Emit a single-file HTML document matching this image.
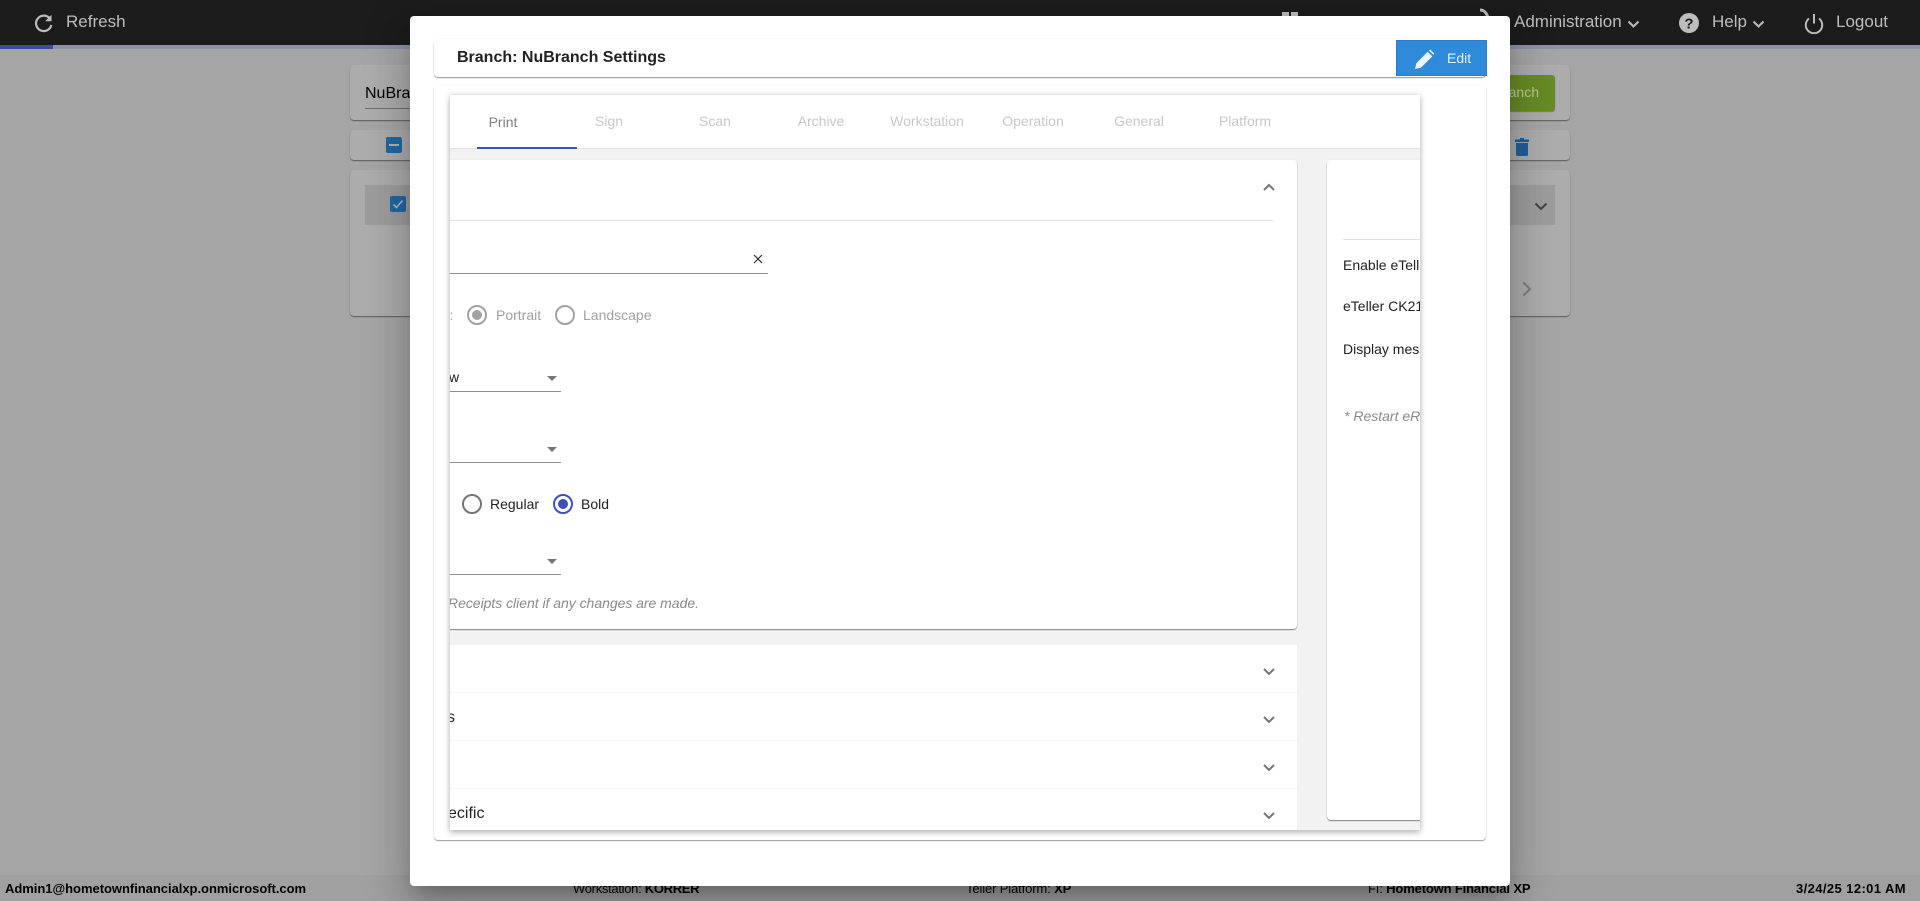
<!DOCTYPE html>
<html><head><meta charset="utf-8"><title>Branch Settings</title>
<style>
html,body{margin:0;padding:0;width:1920px;height:901px;overflow:hidden;background:#a5a5a5;font-family:"Liberation Sans",Arial,sans-serif}
*{box-sizing:border-box}
.a{position:absolute;white-space:nowrap}
.card{position:absolute;background:#acacac;border-radius:4px;box-shadow:0 1px 1px rgba(0,0,0,.45)}
.nav{color:#bdbdbd;font-size:17px;line-height:20px;top:12px}
.foot{font-size:13px;line-height:15px;top:881px;color:#000;font-weight:bold}
.foot span{font-weight:normal}
.t{font-size:14px;line-height:16px;color:#222}
.tab{position:absolute;width:106px;text-align:center;top:113px;font-size:14px;line-height:16px;color:#c8c8c8}
.ul{position:absolute;height:1px;background:#8f8f8f}
.arrow{position:absolute;width:0;height:0;border-left:5px solid transparent;border-right:5px solid transparent;border-top:5px solid #757575;left:547px}
.sep{position:absolute;left:450px;width:847px;height:1px;background:#f6f6f6}
</style></head><body>

<!-- background -->
<div class="a" style="left:0;top:875px;width:1920px;height:26px;background:#a0a0a0"></div>
<div class="card" style="left:350px;top:65px;width:1220px;height:55px"></div>
<div class="card" style="left:350px;top:130px;width:1220px;height:30px"></div>
<div class="card" style="left:350px;top:170px;width:1220px;height:146px"></div>
<div class="a" style="left:365px;top:185px;width:1190px;height:40px;background:#9d9d9d"></div>
<div class="a" style="left:365px;top:85px;font-size:16px;line-height:18px;color:#000">NuBranch</div>
<div class="a" style="left:365px;top:108px;width:300px;height:1px;background:#6f6f6f"></div>
<div class="a" style="left:386px;top:137px;width:16px;height:16px;background:#2068a6;border-radius:2px"></div>
<div class="a" style="left:389px;top:144px;width:10px;height:2px;background:#b5b5b5"></div>
<div class="a" style="left:390px;top:196px;width:16px;height:16px;background:#2068a6;border-radius:2px"></div>
<svg class="a" style="left:390px;top:196px" width="16" height="16"><path d="M3.5 8.5l3 3 6-7" fill="none" stroke="#b5b5b5" stroke-width="1.6"/></svg>
<div class="a" style="left:1400px;top:75px;width:155px;height:36px;background:#688c24;border-radius:3px;box-shadow:0 1px 1px rgba(0,0,0,.3)"></div>
<div class="a" style="left:1460px;top:84px;width:79px;text-align:right;font-size:14px;line-height:16px;color:#b9c9a0">Branch</div>
<svg class="a" style="left:1515px;top:138px" width="14" height="18"><path d="M5 0h4v1.5h5V4H0V1.5h5zM1 5h12v11.5a1.5 1.5 0 0 1-1.5 1.5h-9A1.5 1.5 0 0 1 1 16.500z" fill="#20609a"/></svg>
<svg class="a" style="left:1534px;top:202px" width="14" height="10"><path d="M1.500 1.500l5.500 5.500 5.500-5.500" fill="none" stroke="#444" stroke-width="2"/></svg>
<svg class="a" style="left:1522px;top:281px" width="10" height="16"><path d="M1.500 1.500l6.500 6.500-6.500 6.500" fill="none" stroke="#7c7c7c" stroke-width="2"/></svg>

<!-- footer text -->
<div class="a foot" style="left:5px;letter-spacing:-.03px">Admin1@hometownfinancialxp.onmicrosoft.com</div>
<div class="a foot" style="left:573px;letter-spacing:-.3px"><span>Workstation:</span> KORRER</div>
<div class="a foot" style="left:966px;letter-spacing:-.13px"><span>Teller Platform:</span> XP</div>
<div class="a foot" style="left:1368px;letter-spacing:-.15px"><span>FI:</span> Hometown Financial XP</div>
<div class="a foot" style="left:1796px;letter-spacing:.4px">3/24/25 12:01 AM</div>

<!-- top bar -->
<div class="a" style="left:0;top:0;width:1920px;height:45px;background:#1c1c1c"></div>
<div class="a" style="left:0;top:45px;width:1920px;height:4px;background:#8e91ab"></div>
<div class="a" style="left:0;top:45px;width:53px;height:4px;background:#3b4ba5"></div>
<svg class="a" style="left:34px;top:13px" width="20" height="20"><path d="M15.500 5.200A7.700 7.700 0 1 0 17.300 12" fill="none" stroke="#bdbdbd" stroke-width="2.200"/><path d="M17.500 1.800v6.400h-6.400z" fill="#bdbdbd"/></svg>
<div class="a nav" style="left:66px">Refresh</div>
<svg class="a" style="left:1280px;top:10px" width="20" height="8"><path d="M2 2h7v6H2zM11 2h7v6h-7z" fill="#bdbdbd"/></svg>
<svg class="a" style="left:1478px;top:8px" width="18" height="10"><path d="M2 2c4 0 7 3 8 8" fill="none" stroke="#bdbdbd" stroke-width="3"/></svg>
<div class="a nav" style="left:1514px">Administration</div>
<svg class="a" style="left:1627px;top:20px" width="13" height="10"><path d="M1.500 1.500l5 5 5-5" fill="none" stroke="#bdbdbd" stroke-width="2"/></svg>
<svg class="a" style="left:1679px;top:13px" width="20" height="20"><circle cx="10" cy="10" r="10" fill="#bdbdbd"/><text x="10" y="15.500" text-anchor="middle" font-family="Liberation Sans" font-weight="bold" font-size="15" fill="#1c1c1c">?</text></svg>
<div class="a nav" style="left:1712px">Help</div>
<svg class="a" style="left:1752px;top:20px" width="13" height="10"><path d="M1.500 1.500l5 5 5-5" fill="none" stroke="#bdbdbd" stroke-width="2"/></svg>
<svg class="a" style="left:1804px;top:12px" width="20" height="22"><path d="M5 6.500a8.200 8.200 0 1 0 10 0" fill="none" stroke="#bdbdbd" stroke-width="2"/><path d="M10 2v9.500" stroke="#bdbdbd" stroke-width="2"/></svg>
<div class="a nav" style="left:1836px">Logout</div>

<!-- modal -->
<div class="a" style="left:410px;top:16px;width:1100px;height:870px;background:#fff;border-radius:4px;box-shadow:0 11px 15px -7px rgba(0,0,0,.2),0 24px 38px 3px rgba(0,0,0,.14),0 9px 46px 8px rgba(0,0,0,.12)"></div>

<!-- header card -->
<div class="a" style="left:434px;top:39px;width:1052px;height:38px;background:#fff;border-radius:4px;box-shadow:0 1px 1px rgba(0,0,0,.42),0 0 2px rgba(0,0,0,.05)"></div>
<div class="a" style="left:457px;top:49px;font-size:16px;line-height:18px;font-weight:bold;color:#222">Branch: NuBranch Settings</div>
<div class="a" style="left:1396px;top:40px;width:91px;height:36px;background:#2f8ad9;border:1px solid #2a7cc4"></div>
<svg class="a" style="left:1414px;top:49px" width="21" height="21"><path d="M1 20l1.300-5.800L13.700 2.800l4.600 4.600L6.800 18.800z M15 1.500l1.200-1 4 4-1 1.200z" fill="#eef5fc"/></svg>
<div class="a" style="left:1447px;top:50px;font-size:14px;line-height:16px;color:#e6f1fb">Edit</div>

<!-- content card -->
<div class="a" style="left:434px;top:85px;width:1052px;height:755px;background:#fff;border-radius:4px;box-shadow:0 1px 1px rgba(0,0,0,.38),0 0 2px rgba(0,0,0,.06)"></div>

<!-- clipped panel -->
<div class="a" style="left:450px;top:95px;width:970px;height:735px;background:#f2f2f2;box-shadow:0 3px 6px rgba(0,0,0,.22),0 0 6px rgba(0,0,0,.14)"></div>
<div class="a" style="left:450px;top:95px;width:970px;height:735px;overflow:hidden">
<div style="position:absolute;left:-450px;top:-95px;width:1920px;height:901px">
  <div class="a" style="left:450px;top:95px;width:970px;height:54px;background:#fff;border-bottom:1px solid #e0e0e0"></div>
  <div class="a" style="left:477px;top:147px;width:100px;height:2px;background:#3f51b5"></div>
  <div class="tab" style="left:450px;top:114px;color:#808080">Print</div>
  <div class="tab" style="left:556px">Sign</div>
  <div class="tab" style="left:662px">Scan</div>
  <div class="tab" style="left:768px">Archive</div>
  <div class="tab" style="left:874px">Workstation</div>
  <div class="tab" style="left:980px">Operation</div>
  <div class="tab" style="left:1086px">General</div>
  <div class="tab" style="left:1192px">Platform</div>

  <!-- left main card -->
  <div class="a" style="left:430px;top:160px;width:867px;height:469px;background:#fff;border-radius:4px;box-shadow:0 1px 1px rgba(0,0,0,.45),0 0 3px rgba(0,0,0,.05)"></div>
  <div class="a" style="left:430px;top:220px;width:843px;height:1px;background:#e2e2e2"></div>
  <svg class="a" style="left:1263px;top:183px" width="12" height="8"><path d="M1 7l5-5 5 5" fill="none" stroke="#757575" stroke-width="2"/></svg>

  <div class="a" style="left:430px;top:273px;width:338px;height:1px;background:#8f8f8f"></div>
  <svg class="a" style="left:753px;top:254px" width="10" height="10"><path d="M1 1l8 8M9 1l-8 8" stroke="#2a2a3a" stroke-width="1.200"/></svg>

  <div class="a t" style="left:449.500px;top:307px;color:#999">:</div>
  <svg class="a" style="left:467px;top:305px" width="20" height="20"><circle cx="10" cy="10" r="9" fill="none" stroke="#a3a3a3" stroke-width="2"/><circle cx="10" cy="10" r="5" fill="#a3a3a3"/></svg>
  <div class="a t" style="left:496px;top:307px;color:#a0a0a8">Portrait</div>
  <svg class="a" style="left:555px;top:305px" width="20" height="20"><circle cx="10" cy="10" r="9" fill="none" stroke="#a3a3a3" stroke-width="2"/></svg>
  <div class="a t" style="left:583px;top:307px;color:#a0a0a8">Landscape</div>

  <div class="a t" style="left:449px;top:369px">w</div>
  <div class="a ul" style="left:430px;top:391px;width:131px"></div>
  <div class="arrow" style="top:376px"></div>
  <div class="arrow" style="top:447px"></div>
  <div class="a ul" style="left:430px;top:462px;width:131px"></div>

  <svg class="a" style="left:462px;top:494px" width="20" height="20"><circle cx="10" cy="10" r="9" fill="none" stroke="#757575" stroke-width="2"/></svg>
  <div class="a t" style="left:490px;top:496px">Regular</div>
  <svg class="a" style="left:553px;top:494px" width="20" height="20"><circle cx="10" cy="10" r="9" fill="none" stroke="#3f51b5" stroke-width="2"/><circle cx="10" cy="10" r="5" fill="#3f51b5"/></svg>
  <div class="a t" style="left:581px;top:496px">Bold</div>

  <div class="arrow" style="top:559px"></div>
  <div class="a ul" style="left:430px;top:574px;width:131px"></div>
  <div class="a t" style="left:448px;top:595px;font-style:italic;color:#8a8a8a;letter-spacing:-.03px">Receipts client if any changes are made.</div>

  <!-- accordion -->
  <div class="a" style="left:430px;top:645px;width:867px;height:190px;background:#fff"></div>
  <div class="sep" style="top:692px"></div>
  <div class="sep" style="top:740px"></div>
  <div class="sep" style="top:788px"></div>
  <svg class="a" style="left:1263px;top:668px" width="12" height="8"><path d="M1 1l5 5 5-5" fill="none" stroke="#757575" stroke-width="2"/></svg>
  <svg class="a" style="left:1263px;top:716px" width="12" height="8"><path d="M1 1l5 5 5-5" fill="none" stroke="#757575" stroke-width="2"/></svg>
  <svg class="a" style="left:1263px;top:764px" width="12" height="8"><path d="M1 1l5 5 5-5" fill="none" stroke="#757575" stroke-width="2"/></svg>
  <svg class="a" style="left:1263px;top:812px" width="12" height="8"><path d="M1 1l5 5 5-5" fill="none" stroke="#757575" stroke-width="2"/></svg>
  <div class="a" style="left:447px;top:709px;font-size:16px;line-height:18px;color:#222">s</div>
  <div class="a" style="left:448px;top:805px;font-size:16px;line-height:18px;color:#222">ecific</div>

  <!-- right card -->
  <div class="a" style="left:1327px;top:160px;width:200px;height:660px;background:#fff;border-radius:4px;box-shadow:0 1px 1px rgba(0,0,0,.45),0 0 3px rgba(0,0,0,.05)"></div>
  <div class="a" style="left:1343px;top:239px;width:100px;height:1px;background:#e2e2e2"></div>
  <div class="a t" style="left:1343px;top:257px">Enable eTeller</div>
  <div class="a t" style="left:1343px;top:298px">eTeller CK21</div>
  <div class="a t" style="left:1343px;top:341px">Display message</div>
  <div class="a t" style="left:1344px;top:408px;font-style:italic;color:#8a8a8a">* Restart eReceipts</div>
</div>
</div>
</body></html>
